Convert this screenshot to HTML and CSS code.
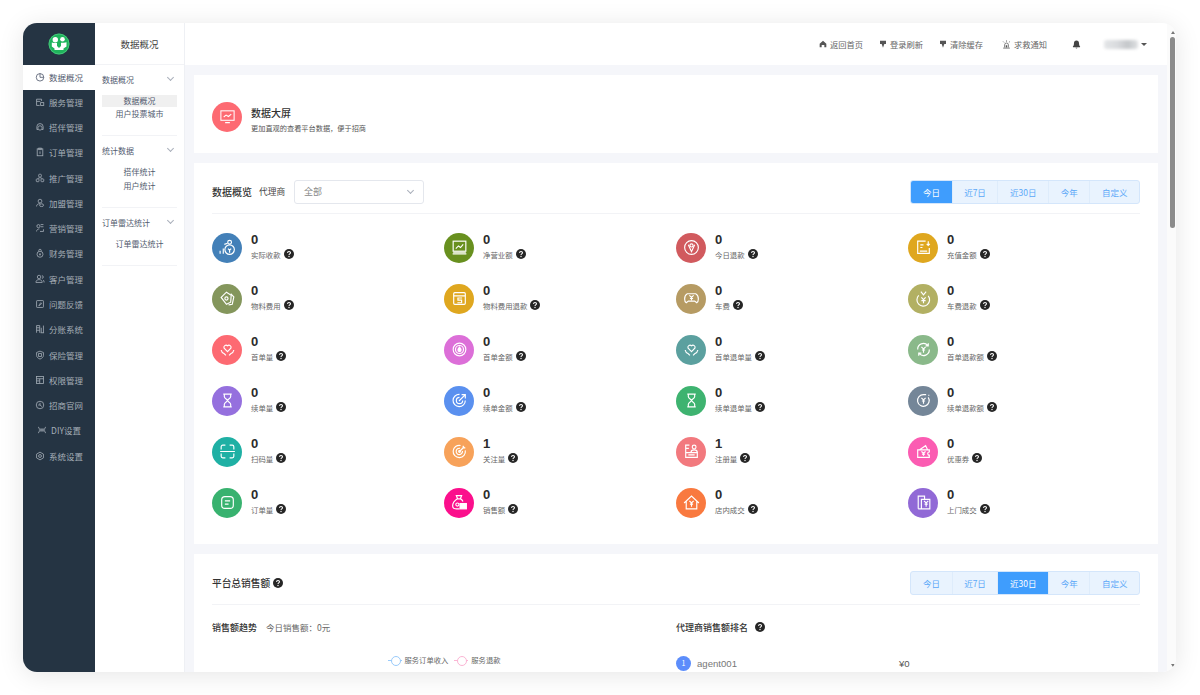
FILE: index.html
```html
<!DOCTYPE html>
<html lang="zh-CN">
<head>
	<meta charset="UTF-8">
	<title>数据概况</title>
	<link rel="stylesheet" href="styles.css">
</head>
<body>
	<svg class="defs" width="0" height="0">
		<defs>
			<symbol id="q" viewBox="0 0 16 16"><circle cx="8" cy="8" r="8" fill="#262626"/><path d="M5.6 6.2C5.700 4.700 6.700 4 8 4c1.400 0 2.400.8 2.400 2 0 1.900-2.400 1.800-2.400 3.600" fill="none" stroke="#fff" stroke-width="1.700"/><circle cx="8" cy="12" r="1.100" fill="#fff"/></symbol>
		</defs>
	</svg>
	<div class="window">
		<aside class="nav">
			<div class="logo">
				<svg width="22" height="22" viewBox="0 0 22 22"><circle cx="11" cy="11" r="10.500" fill="#1fb45c"/><circle cx="11" cy="11" r="10" fill="none" stroke="#5fd08e" stroke-width=".6"/><circle cx="7.300" cy="6.800" r="2.700" fill="#fff"/><circle cx="14.500" cy="6.300" r="2.300" fill="#fff"/><path d="M3.800 9.500 6 10h3v3.500h4V9.800h3l2.500-.5v4.200L15.500 15.500v1.500h-9v-1.500l-2.700-2z" fill="#fff"/><path d="M10 9.500h2v5h-2z" fill="#1fb45c"/></svg>
			</div>
			<a class="nav-item active"><svg viewBox="0 0 16 16"><circle cx="8" cy="8.500" r="6"/><path d="M8 2.500v6h6"/></svg>数据概况</a>
			<a class="nav-item"><svg viewBox="0 0 16 16"><path d="M2.500 13.500v-10h8v3M2.500 7h6M2.500 13.500h5"/><rect x="9" y="9" width="5" height="4.500"/></svg>服务管理</a>
			<a class="nav-item"><svg viewBox="0 0 16 16"><path d="M3 12V7.500a5 5 0 0 1 10 0V12"/><circle cx="8" cy="9.500" r="3.500"/><path d="M3 12h2M11 12h2"/></svg>搭伴管理</a>
			<a class="nav-item"><svg viewBox="0 0 16 16"><rect x="3.500" y="3" width="9" height="11"/><rect x="6" y="1.800" width="4" height="2.500"/><path d="M8 7v4"/></svg>订单管理</a>
			<a class="nav-item"><svg viewBox="0 0 16 16"><rect x="5.800" y="2" width="4.400" height="4.400" rx="1.500"/><rect x="2" y="9.500" width="4.400" height="4.400" rx="1"/><rect x="9.600" y="9.500" width="4.400" height="4.400" rx="1"/><path d="M8 6.500V9M4.500 9.500 6.500 7M11.500 9.500 9.500 7"/></svg>推广管理</a>
			<a class="nav-item"><svg viewBox="0 0 16 16"><circle cx="8" cy="5" r="3"/><path d="M2.500 13.500c0-3 2.400-4.500 5.500-4.500"/><ellipse cx="10.500" cy="11.500" rx="3.200" ry="2.200"/></svg>加盟管理</a>
			<a class="nav-item"><svg viewBox="0 0 16 16"><circle cx="5.500" cy="5" r="2.500"/><path d="M9 2.500h4.500M9 6h4.500M2.500 13.500c0-2.500 2-4 4.500-4M8 13.500h5.500v-3.500"/></svg>营销管理</a>
			<a class="nav-item"><svg viewBox="0 0 16 16"><circle cx="8" cy="10" r="4.800"/><path d="M6 5.500V4a2 2 0 0 1 4 0v1.500M6.500 10h3M8 8.500v3.500"/></svg>财务管理</a>
			<a class="nav-item"><svg viewBox="0 0 16 16"><circle cx="6.500" cy="4.800" r="2.800"/><path d="M1.500 13.500c0-3 2-4.500 5-4.500s5 1.500 5 4.500zM11 2.500c1.500.3 2.300 1.200 2.300 2.300S12.500 7 11 7.200M13 9.500c1 .7 1.600 2 1.600 4"/></svg>客户管理</a>
			<a class="nav-item"><svg viewBox="0 0 16 16"><rect x="2.500" y="2.500" width="11" height="11" rx="1"/><path d="m6 10.500 2-.5 2.500-3-1.300-1L7 9z"/></svg>问题反馈</a>
			<a class="nav-item"><svg viewBox="0 0 16 16"><path d="M2.500 14V2.500h5V14M2.500 6h5M2.500 10h5M10 14V6M13.500 14V2.500M9 14h5.500"/></svg>分账系统</a>
			<a class="nav-item"><svg viewBox="0 0 16 16"><path d="M8 1.800 13.500 4v4.500c0 3-2.500 4.800-5.500 6-3-1.200-5.500-3-5.500-6V4z"/><rect x="5.800" y="5.800" width="4.400" height="4.400"/></svg>保险管理</a>
			<a class="nav-item"><svg viewBox="0 0 16 16"><rect x="2.500" y="2.500" width="11" height="11"/><path d="M2.500 6h11M2.500 9.500h5M7.500 6v7.500"/></svg>权限管理</a>
			<a class="nav-item"><svg viewBox="0 0 16 16"><circle cx="8" cy="8" r="6"/><path d="M8 4.500V8H5M8 8l3 2.500"/></svg>招商官网</a>
			<a class="nav-item"><svg viewBox="0 0 16 16"><path d="M2.500 3c0 3 1.500 3.500 3 3.500h5c1.500 0 3-.5 3-3.500M2.500 13c0-3 1.500-3.500 3-3.500h5c1.500 0 3 .5 3 3.500M3 8h10"/></svg>DIY设置</a>
			<a class="nav-item"><svg viewBox="0 0 16 16"><path d="M8 1.800 13.500 5v6L8 14.200 2.500 11V5z"/><circle cx="8" cy="8" r="2.300"/></svg>系统设置</a>
		</aside>

		<aside class="subnav">
			<div class="subnav-title">数据概况</div>
			<div class="group">
				<div class="group-head">数据概况<i class="chev"></i></div>
				<a class="sub-item on">数据概况</a>
				<a class="sub-item">用户投票城市</a>
			</div>
			<div class="group">
				<div class="group-head">统计数据<i class="chev"></i></div>
				<a class="sub-item">搭伴统计</a>
				<a class="sub-item">用户统计</a>
			</div>
			<div class="group">
				<div class="group-head">订单雷达统计<i class="chev"></i></div>
				<a class="sub-item">订单雷达统计</a>
			</div>
		</aside>

		<div class="main">
			<header class="topbar">
				<a class="top-link"><svg viewBox="0 0 12 12"><path d="M6 1 1 5.500V11h3V7.500h4V11h3V5.500z"/></svg>返回首页</a>
				<a class="top-link"><svg viewBox="0 0 12 12"><path d="M1.500 1h9v5H8L6 11.500 4 6H1.500z"/></svg>登录刷新</a>
				<a class="top-link"><svg viewBox="0 0 12 12"><path d="M1.500 1h9v5H8L6 11.500 4 6H1.500z"/></svg>清除缓存</a>
				<a class="top-link sos"><svg viewBox="0 0 12 12"><path class="line" d="M3.500 10V6.500a2.500 2.500 0 0 1 5 0V10M1.500 10.800h9M6 .5v1.800M1.500 2l1.300 1.300M10.500 2 9.200 3.300"/><path d="M5 7h2v3H5z"/></svg>求救通知</a>
				<svg class="bell" viewBox="0 0 12 12"><path d="M6 .8c-2.200 0-3.400 1.700-3.400 3.700 0 2.300-.6 3.300-1.400 4.200v.8h9.600v-.8c-.8-.9-1.400-1.900-1.400-4.200C9.400 2.500 8.200.8 6 .8zM4.700 10.300h2.600C7.200 11 6.700 11.400 6 11.400s-1.200-.4-1.300-1.100z"/></svg>
				<div class="user"><span class="user-blur"></span><i class="caret"></i></div>
			</header>

			<div class="content">
				<section class="card banner">
					<span class="circle big" style="background:#fd6a72"><svg viewBox="0 0 18 18"><rect x="2" y="3" width="14" height="10"/><path d="m5 9.500 2.500-2 2.500 1.500 3-2.500M6.500 15.500h5"/></svg></span>
					<div class="banner-text">
						<div class="banner-title">数据大屏</div>
						<div class="banner-desc">更加直观的查看平台数据，便于招商</div>
					</div>
				</section>

				<section class="card overview">
					<div class="card-head">
						<div class="head-left">
							<span class="card-title">数据概览</span>
							<span class="agent-label">代理商</span>
							<div class="select">全部<i class="chev"></i></div>
						</div>
						<div class="tabs">
							<a class="tab on">今日</a><a class="tab">近7日</a><a class="tab">近30日</a><a class="tab">今年</a><a class="tab">自定义</a>
						</div>
					</div>
					<div class="stats">
						<div class="stat"><span class="circle" style="background:#4380b8"><svg viewBox="0 0 18 18"><circle cx="11" cy="4" r="1.800"/><circle cx="11" cy="11" r="4.500"/><path d="M2 15v-3M5 15v-5M9.500 10l1.500 1.500L12.500 10M11 11.500V14M6 6l3-1"/></svg></span><div><b>0</b><p>实际收款<svg class="q"><use href="#q"/></svg></p></div></div>
						<div class="stat"><span class="circle" style="background:#68901f"><svg viewBox="0 0 18 18"><rect x="3" y="3" width="12" height="9.500"/><path d="m5.500 10 2.500-2.500 2 1.500 2.500-3M2.500 15h13M3 13.500h12"/></svg></span><div><b>0</b><p>净营业额<svg class="q"><use href="#q"/></svg></p></div></div>
						<div class="stat"><span class="circle" style="background:#d15a5e"><svg viewBox="0 0 18 18"><circle cx="9" cy="9" r="6.500"/><circle cx="9" cy="7" r="1.500"/><path d="M6 6.500 9 13l3-6.500"/></svg></span><div><b>0</b><p>今日退款<svg class="q"><use href="#q"/></svg></p></div></div>
						<div class="stat"><span class="circle" style="background:#dfa71f"><svg viewBox="0 0 18 18"><path d="M11 3H3.500v11.500h11V9.500"/><path d="M6 6.500h3M6 9h2M5.500 12.500h7M13.500 3v4M12 5.500l1.500 1.500L15 5.500"/></svg></span><div><b>0</b><p>充值金额<svg class="q"><use href="#q"/></svg></p></div></div>

						<div class="stat"><span class="circle" style="background:#84965c"><svg viewBox="0 0 18 18"><path d="m3 8 5-5 4.500 3-.5 6.500-4 2z"/><path d="m12 4.500 3 3-1.500 7-3.500.5"/><circle cx="8" cy="9" r="1.500"/></svg></span><div><b>0</b><p>物料费用<svg class="q"><use href="#q"/></svg></p></div></div>
						<div class="stat"><span class="circle" style="background:#dfa71f"><svg viewBox="0 0 18 18"><rect x="3.500" y="3.500" width="11" height="11" rx="1"/><path d="M3.500 6.500h11M11.500 8.500H7.500v2h3.500v2.500H7"/></svg></span><div><b>0</b><p>物料费用退款<svg class="q"><use href="#q"/></svg></p></div></div>
						<div class="stat"><span class="circle" style="background:#b69b63"><svg viewBox="0 0 18 18"><path d="M5 4.500h8c2 1 2.500 3 2.500 5 0 2-.5 3-1.500 3.500l-2-1.500H6L4 13c-1-.5-1.500-1.500-1.500-3.500s.5-4 2.500-5z"/><path d="m7 6 2 2 2-2M9 8v3M7.500 9h3"/></svg></span><div><b>0</b><p>车费<svg class="q"><use href="#q"/></svg></p></div></div>
						<div class="stat"><span class="circle" style="background:#b2b063"><svg viewBox="0 0 18 18"><path d="M13.500 6.500A6 6 0 1 1 4.500 6M6.500 2.500l2.500 3 2.500-3"/><path d="m7 8 2 2 2-2M9 10v3.500M7 11h4"/></svg></span><div><b>0</b><p>车费退款<svg class="q"><use href="#q"/></svg></p></div></div>

						<div class="stat"><span class="circle" style="background:#fd6a72"><svg viewBox="0 0 18 18"><path d="M9 11 5.800 7.800a2 2 0 0 1 3.200-2.300 2 2 0 0 1 3.200 2.300z"/><path d="M3 9.500c.3 2 1.500 3 3 3.500l1.500 1.500M15 9.500c-.3 2-1.500 3-3 3.500l-1.500 1.500"/></svg></span><div><b>0</b><p>首单量<svg class="q"><use href="#q"/></svg></p></div></div>
						<div class="stat"><span class="circle" style="background:#dc6fd8"><svg viewBox="0 0 18 18"><circle cx="9" cy="9" r="6"/><circle cx="9" cy="9" r="3.800"/><path d="M9 6.800c-1 1.200-1.500 1.800-1.500 2.700a1.500 1.500 0 0 0 3 0c0-.9-.5-1.500-1.500-2.700z" fill="#fff"/></svg></span><div><b>0</b><p>首单金额<svg class="q"><use href="#q"/></svg></p></div></div>
						<div class="stat"><span class="circle" style="background:#5ba09f"><svg viewBox="0 0 18 18"><path d="M9 11 5.800 7.800a2 2 0 0 1 3.200-2.300 2 2 0 0 1 3.200 2.300z"/><path d="M3 9.500c.3 2 1.500 3 3 3.500l1.500 1.500M15 9.500c-.3 2-1.500 3-3 3.500l-1.500 1.500"/></svg></span><div><b>0</b><p>首单退单量<svg class="q"><use href="#q"/></svg></p></div></div>
						<div class="stat"><span class="circle" style="background:#8ab98a"><svg viewBox="0 0 18 18"><path d="M3.500 9A5.500 5.500 0 0 1 13 5M14.500 9A5.500 5.500 0 0 1 5 13M13.500 3v2.500H11M4.500 15v-2.500H7"/><path d="m7 6.500 2 2 2-2M9 8.500V12M7.500 9.500h3"/></svg></span><div><b>0</b><p>首单退款额<svg class="q"><use href="#q"/></svg></p></div></div>

						<div class="stat"><span class="circle" style="background:#9570de"><svg viewBox="0 0 18 18"><path d="M5 3h8M5 15h8M6 3v2.500c0 1.500 3 2.500 3 3.500s-3 2-3 3.500V15M12 3v2.500C12 7 9 8 9 9s3 2 3 3.500V15"/></svg></span><div><b>0</b><p>续单量<svg class="q"><use href="#q"/></svg></p></div></div>
						<div class="stat"><span class="circle" style="background:#5a90ef"><svg viewBox="0 0 18 18"><path d="M14.500 9A5.800 5.800 0 1 1 9 3.200"/><path d="M12 9a3 3 0 1 1-3-3M8.500 9.500l6-6M11 3.500h3.500V7"/></svg></span><div><b>0</b><p>续单金额<svg class="q"><use href="#q"/></svg></p></div></div>
						<div class="stat"><span class="circle" style="background:#3eb370"><svg viewBox="0 0 18 18"><path d="M5 3h8M5 15h8M6 3v2.500c0 1.500 3 2.500 3 3.500s-3 2-3 3.500V15M12 3v2.500C12 7 9 8 9 9s3 2 3 3.500V15"/></svg></span><div><b>0</b><p>续单退单量<svg class="q"><use href="#q"/></svg></p></div></div>
						<div class="stat"><span class="circle" style="background:#748698"><svg viewBox="0 0 18 18"><path d="M13.500 6A5.500 5.500 0 1 1 9 3.500h2.500"/><path d="m7 6.500 2 2 2-2M9 8.500V12M7.500 9.500h3M14 3.500v1"/></svg></span><div><b>0</b><p>续单退款额<svg class="q"><use href="#q"/></svg></p></div></div>

						<div class="stat"><span class="circle" style="background:#1fb0a4"><svg viewBox="0 0 18 18"><path d="M3 7V4.500A1.500 1.500 0 0 1 4.500 3H7M11 3h2.500A1.500 1.500 0 0 1 15 4.500V7M3 11v2.500A1.500 1.500 0 0 0 4.500 15H7M11 15h2.500a1.500 1.500 0 0 0 1.500-1.500V11M2 9h14"/></svg></span><div><b>0</b><p>扫码量<svg class="q"><use href="#q"/></svg></p></div></div>
						<div class="stat"><span class="circle" style="background:#f7a25a"><svg viewBox="0 0 18 18"><path d="M14.500 8A5.800 5.800 0 1 1 10 3.300"/><path d="M11.800 8.500A3 3 0 1 1 9.500 6"/><circle cx="9" cy="9" r=".8"/><path d="m9 9 4.500-4.500M12.500 3.500v2h2"/></svg></span><div><b>1</b><p>关注量<svg class="q"><use href="#q"/></svg></p></div></div>
						<div class="stat"><span class="circle" style="background:#f2797e"><svg viewBox="0 0 18 18"><path d="M7 3H3.500v7M3.500 6h3M3.500 10h11v4.500h-11zM6 12.200h6"/><circle cx="11.500" cy="4.800" r="1.800"/><path d="M8.500 10c0-1.500 1.200-2.500 3-2.500s3 1 3 2.500"/></svg></span><div><b>1</b><p>注册量<svg class="q"><use href="#q"/></svg></p></div></div>
						<div class="stat"><span class="circle" style="background:#fb5cb2"><svg viewBox="0 0 18 18"><path d="M3.500 7.500h11v2a1.500 1.500 0 0 0 0 3v2h-11zM5 7.500 11 3.500l2 4"/><path d="m7 9 2 1.500L11 9M9 10.500V13M7.500 11.500h3"/></svg></span><div><b>0</b><p>优惠券<svg class="q"><use href="#q"/></svg></p></div></div>

						<div class="stat"><span class="circle" style="background:#38b26f"><svg viewBox="0 0 18 18"><rect x="3.500" y="3.500" width="11" height="11" rx="3"/><path d="M6.500 7.500h5M6.500 10.500h3.500"/></svg></span><div><b>0</b><p>订单量<svg class="q"><use href="#q"/></svg></p></div></div>
						<div class="stat"><span class="circle" style="background:#fb0f8c"><svg viewBox="0 0 18 18"><path d="M6 2.500h5L9.800 5.500h-2.600zM7 5.500C4 7.500 2.500 10 2.500 12c0 2 1.500 3 3.500 3h3"/><path d="M10 5.500c1 .7 1.800 1.500 2.300 2.500"/><rect x="9.500" y="10" width="6" height="5" fill="#fff"/><circle cx="7" cy="11" r="1.500"/></svg></span><div><b>0</b><p>销售额<svg class="q"><use href="#q"/></svg></p></div></div>
						<div class="stat"><span class="circle" style="background:#f9793f"><svg viewBox="0 0 18 18"><path d="M2 9.500 9 3l7 6.500M4 8v7h10V8"/><path d="m7 7.500 2 2 2-2M9 9.500V13M7.500 10.500h3"/></svg></span><div><b>0</b><p>店内成交<svg class="q"><use href="#q"/></svg></p></div></div>
						<div class="stat"><span class="circle" style="background:#9169d6"><svg viewBox="0 0 18 18"><path d="M4 15V3h6v3M4 15h11V6H7v9"/><path d="m9.500 7.500 2 2 2-2M11.500 9.500V13M10 10.500h3"/></svg></span><div><b>0</b><p>上门成交<svg class="q"><use href="#q"/></svg></p></div></div>
					</div>
				</section>

				<section class="card sales">
					<div class="card-head">
						<div class="head-left">
							<span class="card-title">平台总销售额</span><svg class="q"><use href="#q"/></svg>
						</div>
						<div class="tabs">
							<a class="tab">今日</a><a class="tab">近7日</a><a class="tab on">近30日</a><a class="tab">今年</a><a class="tab">自定义</a>
						</div>
					</div>
					<div class="sales-body">
						<div class="trend">
							<div class="sub-head"><span class="sub-title">销售额趋势</span><span class="today">今日销售额：0元</span></div>
							<div class="legend">
								<span class="legend-item"><i class="mark mark-blue"></i>服务订单收入</span>
								<span class="legend-item"><i class="mark mark-pink"></i>服务退款</span>
							</div>
						</div>
						<div class="rank">
							<div class="sub-head"><span class="sub-title">代理商销售额排名</span><svg class="q"><use href="#q"/></svg></div>
							<div class="rank-row"><span class="rank-no">1</span><span class="rank-name">agent001</span><span class="rank-val">¥0</span></div>
						</div>
					</div>
				</section>
			</div>
		</div>

		<div class="scrollbar">
			<i class="arrow arrow-up"></i>
			<div class="thumb"></div>
			<i class="arrow arrow-down"></i>
		</div>
	</div>
</body>
</html>
```

FILE: styles.css
```css
* {
	margin: 0;
	padding: 0;
	box-sizing: border-box;
}

html,
body {
	height: 100%;
	overflow: hidden;
	background: #fff;
}

body {
	padding: 23px 24px 23px 23px;
	font-family: "Noto Sans CJK SC", "Liberation Sans", sans-serif;
	font-size: 9px;
	color: #515a6e;
}

.defs {
	display: block;
	height: 0;
}

.window {
	display: flex;
	height: 649px;
	border-radius: 14px;
	overflow: hidden;
	box-shadow: 0 3px 26px rgba(0, 0, 0, .1);
	background: #fff;
}

/* 左侧主菜单 */
.nav {
	flex: 0 0 72px;
	background: #253443;
	color: #a4adb6;
	font-size: 8.500px;
}

.logo {
	height: 42px;
	display: flex;
	align-items: center;
	justify-content: center;
}

.nav-item {
	height: 25.27px;
	padding-bottom: 2px;
	display: flex;
	align-items: center;
	justify-content: center;
	gap: 4px;
	white-space: nowrap;
}

.nav-item svg {
	width: 10px;
	height: 10px;
	fill: none;
	stroke: currentColor;
	stroke-width: 1.300;
}

.nav-item.active {
	background: #fff;
	color: #515a6e;
}

/* 二级菜单 */
.subnav {
	flex: 0 0 90px;
	border-right: 1px solid #eef0f4;
	padding: 0 7px;
	font-size: 8px;
}

.subnav-title {
	height: 42px;
	margin: 0 -7px;
	display: flex;
	align-items: center;
	justify-content: center;
	font-size: 9.500px;
	color: #444;
	border-bottom: 1px solid #f2f3f6;
}

.group {
	border-bottom: 1px solid #f2f3f6;
	padding-bottom: 14px;
}

.group-head {
	height: 28px;
	display: flex;
	align-items: center;
	justify-content: space-between;
	margin-bottom: 1px;
}

.chev {
	width: 5px;
	height: 5px;
	border-right: 1px solid #a9afba;
	border-bottom: 1px solid #a9afba;
	transform: rotate(45deg);
	margin: -3px 4px 0 0;
}

.sub-item {
	display: block;
	height: 14px;
	line-height: 14px;
	text-align: center;
}

.sub-item.on {
	background: #f0f0f0;
	height: 12px;
	line-height: 12px;
	margin-top: 2px;
}

/* 顶栏和内容 */
.main {
	flex: 1;
	min-width: 0;
	display: flex;
	flex-direction: column;
	background: #f5f6fa;
}

.topbar {
	flex: 0 0 42px;
	background: #fff;
	display: flex;
	align-items: center;
	justify-content: flex-end;
	padding: 0 20px 0 0;
	color: #666;
	font-size: 8.250px;
}

.top-link {
	display: flex;
	align-items: center;
	gap: 3px;
	margin-right: 16px;
	white-space: nowrap;
}

.top-link svg {
	width: 8px;
	height: 8px;
	fill: #555;
}

.sos {
	margin-left: 3px;
	margin-right: 25px;
}

.sos svg {
	width: 9px;
	height: 9px;
}

.sos .line {
	fill: none;
	stroke: #555;
	stroke-width: 1;
}

.bell {
	width: 9px;
	height: 9px;
	fill: #444;
	margin-right: 23px;
}

.user {
	display: flex;
	align-items: center;
	gap: 3px;
}

.user-blur {
	width: 34px;
	height: 9px;
	border-radius: 3px;
	background: linear-gradient(90deg, #e4e6e8, #d8dadd 40%, #c4c7ca 70%, #dfe1e3);
	filter: blur(1.500px);
}

.caret {
	border: 3px solid transparent;
	border-top: 3.500px solid #555;
	border-bottom: 0;
}

.content {
	flex: 1;
	min-height: 0;
	overflow: hidden;
	padding: 10px 9px 0 9px;
}

.card {
	background: #fff;
	margin-bottom: 10px;
}

.banner {
	height: 78px;
	padding: 5px 18px 0;
	display: flex;
	align-items: center;
	gap: 9px;
}

.banner-text {
	padding-top: 5px;
}

.banner-title {
	font-size: 10px;
	color: #333;
	font-weight: 500;
	line-height: 15px;
}

.banner-desc {
	font-size: 7.200px;
	line-height: 12px;
	color: #555;
	margin-top: 2px;
}

.overview {
	height: 381px;
	padding: 0 18px;
}

.card-head {
	height: 51px;
	padding-top: 7px;
	border-bottom: 1px solid #f2f3f6;
	display: flex;
	align-items: center;
	justify-content: space-between;
}

.head-left {
	display: flex;
	align-items: center;
	gap: 3px;
}

.card-title {
	font-size: 10px;
	font-weight: 500;
	color: #333;
}

.agent-label {
	font-size: 8.700px;
	color: #444;
	margin: 0 6px 0 4px;
}

.select {
	width: 130px;
	height: 24px;
	border: 1px solid #e4e7ed;
	border-radius: 3px;
	padding: 0 9px;
	display: flex;
	align-items: center;
	justify-content: space-between;
	color: #888;
}

.select .chev {
	margin-right: 1px;
}

.tabs {
	display: flex;
	height: 24px;
	border: 1px solid #d4e6fb;
	border-radius: 3px;
	background: #e9f3fe;
	overflow: hidden;
	font-size: 8.500px;
}

.tab {
	padding: 0 11.600px;
	line-height: 22px;
	color: #5ba8f8;
	border-right: 1px solid #deecfb;
	white-space: nowrap;
}

.tab:last-child {
	border-right: 0;
}

.tab.on {
	background: #3f9dfd;
	color: #fff;
}

/* 统计格子 */
.stats {
	display: grid;
	grid-template-columns: repeat(4, 232px);
	grid-auto-rows: 51px;
	padding-top: 8px;
}

.stat {
	display: flex;
	align-items: center;
	gap: 9px;
}

.circle {
	flex: 0 0 30px;
	width: 30px;
	height: 30px;
	border-radius: 50%;
	display: flex;
	align-items: center;
	justify-content: center;
}

.circle svg {
	width: 19px;
	height: 19px;
	fill: none;
	stroke: #fff;
	stroke-width: 1.100;
}

.big svg {
	width: 17px;
	height: 17px;
}

.stat b {
	display: block;
	font: 700 13px/16px "Liberation Sans", sans-serif;
	color: #2b2b2b;
	margin-top: -2px;
}

.stat p {
	display: flex;
	align-items: center;
	font-size: 7.400px;
	line-height: 12px;
	color: #666;
	margin-top: 1px;
}

.q {
	width: 10px;
	height: 10px;
	flex: none;
	margin-left: 3px;
}

.stat p .q {
	margin-top: -2px;
}

/* 销售额 */
.sales {
	height: 200px;
	padding: 0 18px;
	margin-bottom: 0;
}

.sales .card-title {
	font-size: 9.700px;
}

.sales .head-left .q {
	margin-left: 0;
}

.sales-body {
	display: flex;
}

.trend {
	flex: 0 0 464px;
}

.sub-head {
	height: 44px;
	display: flex;
	align-items: center;
}

.sub-title {
	font-size: 9px;
	font-weight: 500;
	color: #333;
}

.today {
	margin-left: 9px;
	font-size: 8.500px;
	color: #666;
}

.sub-head .q {
	margin-left: 7px;
}

.legend {
	display: flex;
	justify-content: center;
	gap: 6px;
	padding-top: 6px;
	font-size: 7.300px;
	color: #666;
}

.legend-item {
	display: flex;
	align-items: center;
	gap: 3px;
}

.mark {
	width: 14px;
	height: 1px;
	position: relative;
	display: block;
}

.mark::after {
	content: "";
	position: absolute;
	left: 3px;
	top: -3.500px;
	width: 8px;
	height: 8px;
	border-radius: 50%;
	background: #fff;
	border: 1px solid;
}

.mark-blue {
	background: #9acbfb;
}

.mark-blue::after {
	border-color: #9acbfb;
}

.mark-pink {
	background: #fbb5d4;
}

.mark-pink::after {
	border-color: #fbb5d4;
}

.rank-row {
	display: flex;
	align-items: center;
	height: 15px;
	margin-top: 7px;
	color: #777;
}

.rank-no {
	width: 15px;
	height: 15px;
	border-radius: 50%;
	background: #5c8dfb;
	color: #fff;
	font-size: 7px;
	line-height: 15px;
	text-align: center;
}

.rank-name {
	width: 208px;
	padding-left: 6px;
	font: 9.600px "Liberation Sans", sans-serif;
}

.rank-val {
	font: 9.600px "Liberation Sans", sans-serif;
	color: #555;
}

/* 滚动条 */
.scrollbar {
	flex: 0 0 9px;
	display: flex;
	flex-direction: column;
	align-items: center;
	background: #fbfbfb;
	padding: 8px 0 5px 2px;
}

.thumb {
	width: 5px;
	height: 191px;
	border-radius: 3px;
	background: #8b8b8b;
	margin: 3px 0 auto;
}

.arrow {
	border: 2.500px solid transparent;
}

.arrow-up {
	border-bottom: 3px solid #777;
	border-top: 0;
}

.arrow-down {
	border-top: 3px solid #777;
	border-bottom: 0;
}
```
